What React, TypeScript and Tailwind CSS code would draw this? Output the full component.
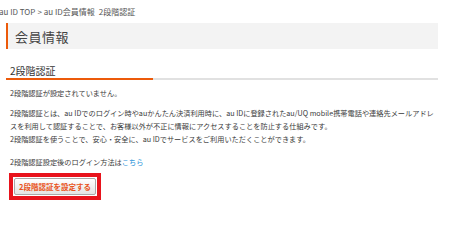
import React from 'react';

const font = { fontFamily: '"Noto Sans CJK JP", "Noto Sans", sans-serif' };

export default function App() {
  return (
    <div className="w-[450px] h-[250px] bg-white overflow-hidden text-[#333]" style={font}>
      {/* breadcrumb */}
      <div className="h-[23px] flex items-center -ml-[1px] pt-[1px] text-[8px] leading-none text-[#555] whitespace-nowrap">
        <span>au ID TOP</span>
        <span className="mx-[2px]">&gt;</span>
        <span>au ID会員情報</span>
        <span className="ml-[4px]">2段階認証</span>
      </div>

      <div className="ml-[6px] w-[432px]">
        {/* page heading */}
        <div className="h-[26px] bg-[#f3f3f3] border-l-[2px] border-[#ec5a0a] flex items-center pl-[7px]">
          <h1 className="text-[13px] leading-none tracking-[0.5px] font-normal text-[#444]">会員情報</h1>
        </div>

        {/* section heading */}
        <div className="mt-[15px]">
          <h2 className="pl-[4px] text-[10px] leading-[14px] font-normal h-[14px]">2段階認証</h2>
          <div className="flex h-[2px]">
            <div className="w-[147px] bg-[#ec5a0a]" />
            <div className="flex-1 bg-[#e1e1e1]" />
          </div>
        </div>

        {/* body */}
        <div className="pl-[4px] pr-[4px] text-[7.2px] leading-[13px] text-[#3a3a3a]">
          <p className="mt-[7px]">2段階認証が設定されていません。</p>
          <p className="mt-[7px]">
            2段階認証とは、au IDでのログイン時やauかんたん決済利用時に、au IDに登録されたau/UQ mobile携帯電話や連絡先メールアドレスを利用して認証することで、お客様以外が不正に情報にアクセスすることを防止する仕組みです。
            <br />
            2段階認証を使うことで、安心・安全に、au IDでサービスをご利用いただくことができます。
          </p>
          <p className="mt-[10px]">
            2段階認証設定後のログイン方法は<a className="text-[#1d8fd8]">こちら</a>
          </p>

          {/* action button with red highlight */}
          <div className="mt-[4px] -ml-[1px] inline-flex border-[4px] border-[#e8131c] p-[1px]">
            <button className="w-[82px] h-[17px] rounded-[2px] border border-[#a9a9a9] bg-gradient-to-b from-white to-[#e4e4e4] text-[#e9531a] text-[7.5px] font-bold leading-none">
              2段階認証を設定する
            </button>
          </div>
        </div>
      </div>
    </div>
  );
}
